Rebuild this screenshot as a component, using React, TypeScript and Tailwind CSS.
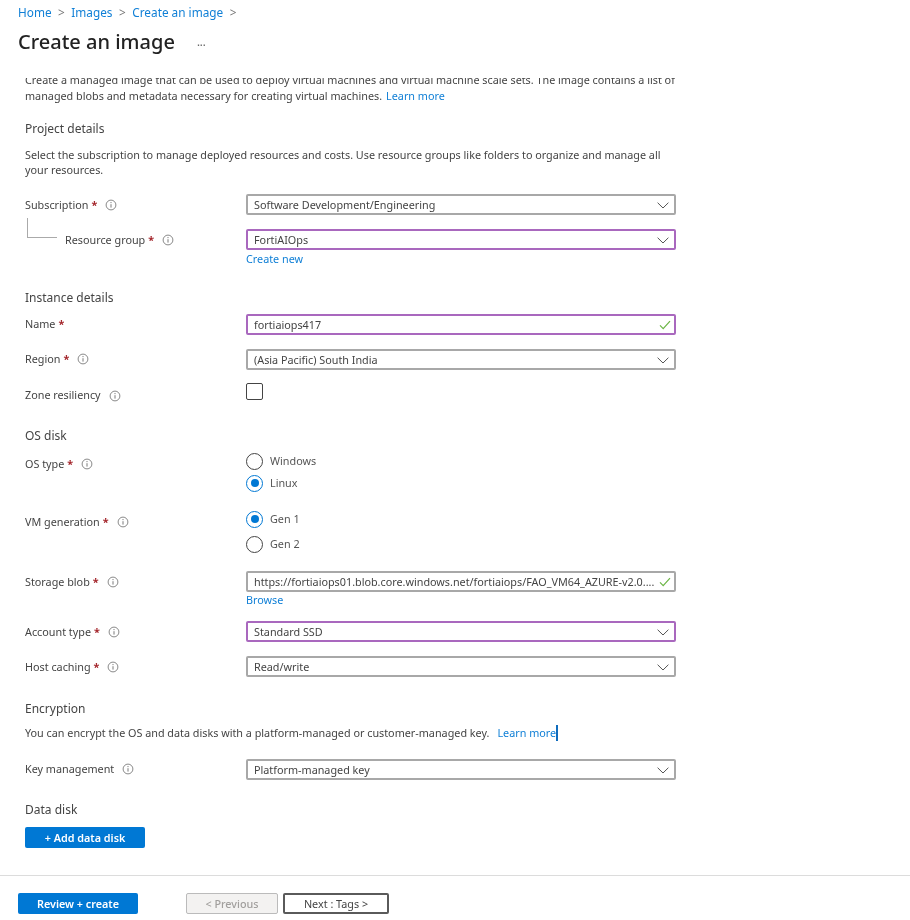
import React from "react";

const Info = () => (
  <svg width="12" height="12" viewBox="0 0 12 12" className="shrink-0" fill="none">
    <circle cx="6" cy="6" r="4.9" stroke="#6b6b6b" strokeWidth="0.8" />
    <path d="M6 5.2V8.6" stroke="#6b6b6b" strokeWidth="0.9" />
    <circle cx="6" cy="3.6" r="0.55" fill="#6b6b6b" />
  </svg>
);

const Chevron = () => (
  <svg width="12" height="7" viewBox="0 0 12 7" fill="none" className="shrink-0">
    <path d="M0.6 0.7L6 6L11.4 0.7" stroke="#555" strokeWidth="1" />
  </svg>
);

const Check = () => (
  <svg width="12" height="10" viewBox="0 0 12 10" fill="none" className="shrink-0">
    <path d="M1 5.4L4.2 8.6L11 1.2" stroke="#6bb544" strokeWidth="1.2" />
  </svg>
);

function Label({ text, required, info }: { text: string; required?: boolean; info?: boolean }) {
  return (
    <div className="flex items-center text-[10.8px] text-[#444]">
      <span>{text}</span>
      {required && <span className="ml-[3px] font-bold text-[#a4262c]">*</span>}
      {info && <span className="ml-[8px]"><Info /></span>}
    </div>
  );
}

function Box({ value, edited, kind = "select" }: { value: string; edited?: boolean; kind?: "select" | "valid" }) {
  return (
    <div
      className={`flex h-[21px] w-[430px] items-center justify-between rounded-[2px] bg-white pl-[6px] pt-[1px] text-[10.8px] text-[#444] ${
        edited ? "border-2 border-[#a968be]" : "border-2 border-[#a8a8a8]"
      } ${kind === "select" ? "pr-[5px]" : "pr-[3px]"}`}
    >
      <span className="truncate">{value}</span>
      {kind === "select" ? <Chevron /> : <Check />}
    </div>
  );
}

function Row({ top, label, children }: { top: string; label: React.ReactNode; children: React.ReactNode }) {
  return (
    <div className={`grid grid-cols-[221px_431px] items-start ${top}`}>
      <div className="flex h-[22px] items-center">{label}</div>
      {children}
    </div>
  );
}

const Heading = ({ top, children }: { top: string; children: React.ReactNode }) => (
  <div className={`h-[16px] text-[12px] leading-[16px] text-[#444] ${top}`}>{children}</div>
);

const Link = ({ children }: { children: React.ReactNode }) => (
  <span className="text-[#0f7fd6]">{children}</span>
);

function Radio({ label, on }: { label: string; on?: boolean }) {
  return (
    <div className="flex h-[22px] items-center gap-[7px] text-[10.8px] text-[#555]">
      <span
        className={`flex h-[17px] w-[17px] items-center justify-center rounded-full border-[1.5px] ${
          on ? "border-[#0078d4]" : "border-[#444]"
        }`}
      >
        {on && <span className="h-[8px] w-[8px] rounded-full bg-[#0078d4]" />}
      </span>
      {label}
    </div>
  );
}

export default function App() {
  return (
    <div className="flex h-[920px] w-[910px] flex-col overflow-hidden bg-white font-['Noto_Sans',sans-serif] blur-[0.35px]">
      <div className="flex h-[25px] items-center pl-[18px] text-[11.8px] text-[#0f7fd6]">
        <span>Home</span>
        <span className="mx-[6.5px] text-[#777]">&gt;</span>
        <span>Images</span>
        <span className="mx-[6.5px] text-[#777]">&gt;</span>
        <span>Create an image</span>
        <span className="mx-[6.5px] text-[#777]">&gt;</span>
      </div>
      <div className="mt-[3px] flex h-[28px] items-center pl-[18px] text-[20px] font-medium text-[#222]">
        <span>Create an image</span>
        <span className="ml-[22px] text-[11px] text-[#666]">...</span>
      </div>

      <div className="mt-[22px] h-[797px] overflow-hidden pl-[25px]">
        <div className="-mt-[6px] w-[665px] text-[10.8px] leading-[15.5px] text-[#444]">
          Create a managed image that can be used to deploy virtual machines and virtual machine scale sets. The image contains a list of
          managed blobs and metadata necessary for creating virtual machines.
          <span className="ml-[4px]"><Link>Learn more</Link></span>
        </div>

        <Heading top="mt-[18px]">Project details</Heading>
        <div className="mt-[10px] w-[640px] text-[10.8px] leading-[15px] text-[#444]">
          Select the subscription to manage deployed resources and costs. Use resource groups like folders to organize and manage all your resources.
        </div>

        <Row top="mt-[17px]" label={<Label text="Subscription" required info />}>
          <Box value="Software Development/Engineering" />
        </Row>
        <div className="relative mt-[13px] grid grid-cols-[221px_431px] items-start">
          <span className="absolute left-[2px] top-[-11px] h-[20px] w-[30px] border-b border-l border-[#aaa]" />
          <div className="flex h-[22px] items-center pl-[40px]">
            <Label text="Resource group" required info />
          </div>
          <div>
            <Box value="FortiAIOps" edited />
            <div className="mt-[2px] text-[10.8px] leading-[14px]"><Link>Create new</Link></div>
          </div>
        </div>

        <Heading top="mt-[24px]">Instance details</Heading>
        <Row top="mt-[8px]" label={<div className="-mt-[2px]"><Label text="Name" required /></div>}>
          <Box value="fortiaiops417" edited kind="valid" />
        </Row>
        <Row top="mt-[13px]" label={<div className="-mt-[2px]"><Label text="Region" required info /></div>}>
          <Box value="(Asia Pacific) South India" />
        </Row>
        <Row top="mt-[12px]" label={<div className="mt-[3px]"><Label text="Zone resiliency" info /></div>}>
          <span className="block h-[17px] w-[17px] rounded-[2px] border-[1.5px] border-[#444]" />
        </Row>

        <Heading top="mt-[23px]">OS disk</Heading>
        <div className="mt-[6px] grid grid-cols-[221px_431px] items-start">
          <div className="flex h-[22px] items-center pt-[6px]"><Label text="OS type" required info /></div>
          <div className="flex flex-col">
            <Radio label="Windows" />
            <Radio label="Linux" on />
          </div>
        </div>
        <div className="mt-[14px] grid grid-cols-[221px_431px] items-start">
          <div className="flex h-[22px] items-center pt-[6px]"><Label text="VM generation" required info /></div>
          <div className="flex flex-col gap-[3px]">
            <Radio label="Gen 1" on />
            <Radio label="Gen 2" />
          </div>
        </div>

        <Row top="mt-[16px]" label={<Label text="Storage blob" required info />}>
          <div>
            <Box value="https://fortiaiops01.blob.core.windows.net/fortiaiops/FAO_VM64_AZURE-v2.0...." kind="valid" />
            <div className="mt-[1px] text-[10.8px] leading-[14px]"><Link>Browse</Link></div>
          </div>
        </Row>
        <Row top="mt-[14px]" label={<Label text="Account type" required info />}>
          <Box value="Standard SSD" edited />
        </Row>
        <Row top="mt-[13px]" label={<Label text="Host caching" required info />}>
          <Box value="Read/write" />
        </Row>

        <Heading top="mt-[23px]">Encryption</Heading>
        <div className="mt-[8px] flex h-[16px] items-center text-[10.8px] text-[#444]">
          You can encrypt the OS and data disks with a platform-managed or customer-managed key.
          <span className="ml-[8px] border-r-2 border-[#0f6cbd] leading-[16px]"><Link>Learn more</Link></span>
        </div>

        <Row top="mt-[18px]" label={<div className="-mt-[2px]"><Label text="Key management" info /></div>}>
          <Box value="Platform-managed key" />
        </Row>

        <Heading top="mt-[21px]">Data disk</Heading>
        <button className="mt-[9px] block h-[21px] w-[120px] rounded-[2px] bg-[#0078d4] pt-[1px] text-[10.8px] font-semibold text-white">
          + Add data disk
        </button>
      </div>

      <div className="border-t border-[#dcdcdc]" />
      <div className="flex items-start pl-[18px] pt-[17px]">
        <button className="h-[21px] w-[120px] rounded-[2px] bg-[#0078d4] pt-[1px] text-[10.8px] font-semibold text-white">Review + create</button>
        <button className="ml-[48px] h-[21px] w-[92px] rounded-[2px] border border-[#bbb] bg-[#f3f2f1] pt-[1px] text-[10.8px] font-medium text-[#a19f9d]">&lt; Previous</button>
        <button className="ml-[5px] h-[21px] w-[106px] rounded-[2px] border-2 border-[#5a5a5a] bg-white pt-[1px] text-[10.8px] text-[#444]">Next : Tags &gt;</button>
      </div>
    </div>
  );
}
